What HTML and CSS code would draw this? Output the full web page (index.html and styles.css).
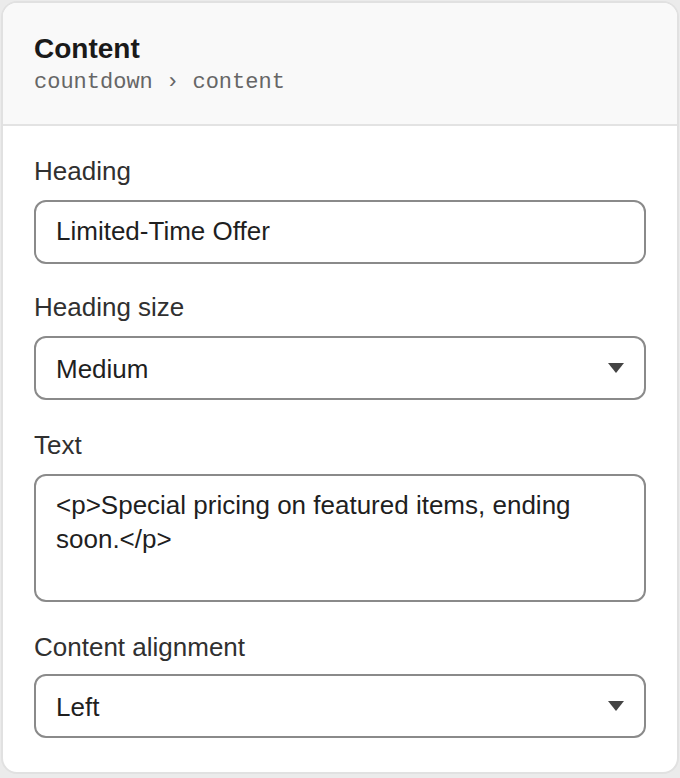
FILE: index.html
```html
<!DOCTYPE html>
<html lang="en">
<head>
<meta charset="utf-8">
<title>Content</title>
<link rel="stylesheet" href="styles.css">
</head>
<body>
<div class="card">
  <div class="card-header">
    <div class="title">Content</div>
    <div class="crumbs">countdown › content</div>
  </div>
  <div class="card-body">
    <div class="field">
      <label class="label">Heading</label>
      <div class="control">Limited-Time Offer</div>
    </div>
    <div class="field">
      <label class="label">Heading size</label>
      <div class="control select">
        <span class="value">Medium</span>
        <svg class="caret" width="16" height="10" viewBox="0 0 16 10"><path d="M0 0H16L8 10Z" fill="#444"/></svg>
      </div>
    </div>
    <div class="field field-text">
      <label class="label">Text</label>
      <div class="control textarea">&lt;p&gt;Special pricing on featured items, ending soon.&lt;/p&gt;</div>
    </div>
    <div class="field field-after-text">
      <label class="label">Content alignment</label>
      <div class="control select">
        <span class="value">Left</span>
        <svg class="caret" width="16" height="10" viewBox="0 0 16 10"><path d="M0 0H16L8 10Z" fill="#444"/></svg>
      </div>
    </div>
  </div>
</div>
</body>
</html>
```
FILE: styles.css
```css
html, body {
  margin: 0;
  padding: 0;
  background: #ebebeb;
}
body {
  font-family: "Liberation Sans", Arial, sans-serif;
  height: 778px;
  overflow: hidden;
}
.card {
  margin: 1px;
  border: 2px solid #e1e1e1;
  border-radius: 16px;
  background: #ffffff;
  overflow: hidden;
}
.card-header {
  background: #f9f9f9;
  padding: 29px 31px 27px;
  border-bottom: 2px solid #e3e3e3;
}
.title {
  font-size: 28px;
  line-height: 34px;
  font-weight: 700;
  color: #1a1a1a;
}
.crumbs {
  margin-top: 3px;
  font-family: "Liberation Mono", "Courier New", monospace;
  font-size: 22px;
  line-height: 28px;
  color: #666666;
}
.card-body {
  padding: 30px 31px 34px;
  display: flex;
  flex-direction: column;
  gap: 28px;
}
.field {
  display: flex;
  flex-direction: column;
}
.label {
  font-size: 26px;
  line-height: 30px;
  color: #303030;
  margin-bottom: 14px;
}
.field-text {
  padding-top: 2px;
}
.field-after-text {
  padding-top: 2px;
}
.field-after-text .label {
  margin-bottom: 12px;
}
.control {
  box-sizing: border-box;
  height: 64px;
  border: 2px solid #8a8a8a;
  border-radius: 12px;
  padding: 11px 20px 13px;
  font-size: 26px;
  line-height: 36px;
  color: #1f1f1f;
  background: #fff;
}
.select {
  display: flex;
  align-items: center;
  justify-content: space-between;
  padding-right: 20px;
}
.value {
  padding-top: 3px;
}
.caret {
  display: block;
  margin-top: 2px;
}
.textarea {
  height: 128px;
  line-height: 34px;
  padding-top: 12px;
}
```
